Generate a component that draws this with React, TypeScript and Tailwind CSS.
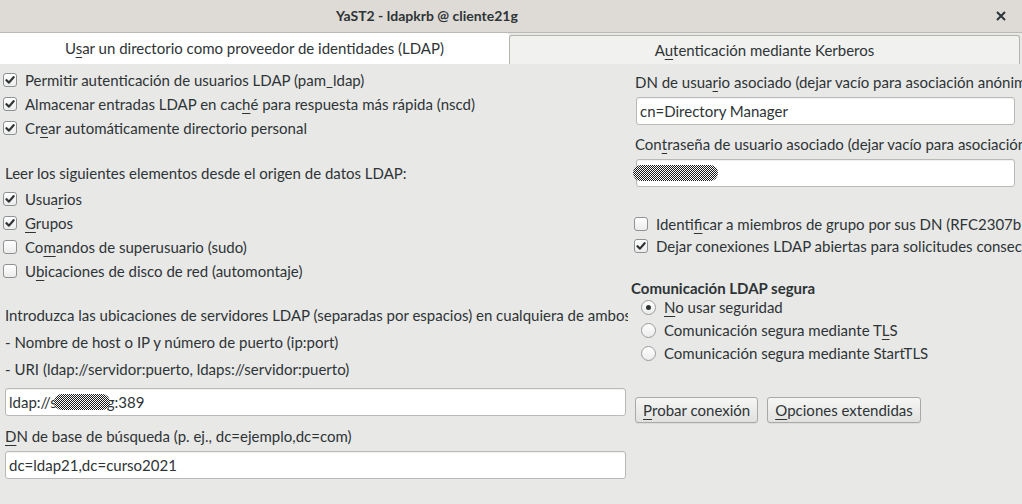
import React from "react";

const font = { fontFamily: "Lato, 'Noto Sans', sans-serif" };

function Check({ on }: { on?: boolean }) {
  return (
    <span className="w-[14px] h-[14px] shrink-0 rounded-[3px] border border-[#8f9292] bg-gradient-to-b from-[#ffffff] to-[#ececec] flex items-center justify-center">
      {on && (
        <svg width="10" height="10" viewBox="0 0 10 10">
          <path d="M1.5 5.2 L4 7.6 L8.6 2.2" fill="none" stroke="#2e3436" strokeWidth="2.2" strokeLinecap="round" strokeLinejoin="round" />
        </svg>
      )}
    </span>
  );
}

function Radio({ on }: { on?: boolean }) {
  return (
    <span className="w-[15px] h-[15px] shrink-0 rounded-full border border-[#9a9c9c] bg-gradient-to-b from-[#ffffff] to-[#ececec] flex items-center justify-center">
      {on && <span className="w-[5px] h-[5px] rounded-full bg-[#2e3436]" />}
    </span>
  );
}

function U({ children }: { children: React.ReactNode }) {
  return <span className="underline decoration-1 underline-offset-[3px]">{children}</span>;
}

function CheckRow({ on, children, h = "h-6" }: { on?: boolean; children: React.ReactNode; h?: string }) {
  return (
    <div className={`flex items-center gap-[8px] whitespace-nowrap ${h}`}>
      <Check on={on} />
      <span>{children}</span>
    </div>
  );
}

function Field({ value, className = "" }: { value: React.ReactNode; className?: string }) {
  return (
    <div className={`relative h-[28px] rounded-[3px] border border-[#b9b9b5] bg-white flex items-center px-[3px] whitespace-nowrap shadow-[inset_0_1px_1px_rgba(0,0,0,0.06)] ${className}`}>
      {value}
    </div>
  );
}

function Scribble({ className }: { className: string }) {
  return (
    <span className={`absolute rounded-full bg-[repeating-conic-gradient(#1a1a1a_0_25%,#ffffff_0_50%)] bg-[length:2px_2px] ${className}`} />
  );
}

function Button({ children }: { children: React.ReactNode }) {
  return (
    <div className="h-[26px] px-[7px] flex items-center rounded-[3px] border border-[#a9aaa8] bg-gradient-to-b from-[#f6f6f5] to-[#e1e1df] shadow-[0_1px_0_rgba(0,0,0,0.05)] whitespace-nowrap">
      {children}
    </div>
  );
}

export default function App() {
  return (
    <div className="w-[1022px] h-[504px] overflow-hidden bg-[#e8e8e7] text-[#2e3436] text-[15px] leading-none" style={font}>
      {/* title bar */}
      <div className="h-[33px] bg-[#dedbd7] border-b border-[#bdb9b4] flex items-center relative">
        <div className="pl-[336px] text-[14px] font-bold text-[#2e3436]">YaST2 - ldapkrb @ cliente21g</div>
        <div className="absolute right-[12px] top-[7px] w-[18px] h-[18px] flex items-center justify-center">
          <svg width="10" height="10" viewBox="0 0 10 10">
            <path d="M1 1 L9 9 M9 1 L1 9" stroke="#2e3436" strokeWidth="2" />
          </svg>
        </div>
      </div>

      {/* tabs */}
      <div className="h-[31px] flex items-end">
        <div className="w-[509px] h-[31px] bg-white rounded-tr-[3px] flex items-center justify-center">
          <span>U<U>s</U>ar un directorio como proveedor de identidades (LDAP)</span>
        </div>
        <div className="w-[511px] h-[29px] bg-[#f1f1f0] border border-b-0 border-[#b3b3b0] rounded-t-[3px] flex items-center justify-center">
          <span>A<U>u</U>tenticación mediante Kerberos</span>
        </div>
      </div>

      <div className="flex">
        {/* left column */}
        <div className="w-[628px] shrink-0 overflow-hidden pl-[3px] whitespace-nowrap">
          <div className="mt-[4px]">
            <CheckRow on>Permitir autenticación de usuarios LDAP (pam_ldap)</CheckRow>
            <CheckRow on>Almacenar entradas LDAP en cac<U>h</U>é para respuesta más rápida (nscd)</CheckRow>
            <CheckRow on>Cr<U>e</U>ar automáticamente directorio personal</CheckRow>
          </div>
          <div className="mt-[21px] h-6 flex items-center pl-[2px]">Leer los siguientes elementos desde el origen de datos LDAP:</div>
          <div className="mt-[2px]">
            <CheckRow on>Usua<U>r</U>ios</CheckRow>
            <CheckRow on><U>G</U>rupos</CheckRow>
            <CheckRow>Co<U>m</U>andos de superusuario (sudo)</CheckRow>
            <CheckRow>U<U>b</U>icaciones de disco de red (automontaje)</CheckRow>
          </div>
          <div className="mt-[20px] h-6 flex items-center pl-[2px]">Introduzca las ubicaciones de servidores LDAP (separadas por espacios) en cualquiera de ambos formatos:</div>
          <div className="mt-[3px] h-6 flex items-center pl-[2px]">- Nombre de host o IP y número de puerto (ip:port)</div>
          <div className="mt-[3px] h-6 flex items-center pl-[2px]">- URI (ldap://servidor:puerto, ldaps://servidor:puerto)</div>
          <Field
            className="mt-[7px] ml-[2px] w-[621px]"
            value={
              <>
                <span>ldap://s</span>
                <span className="inline-block w-[50px]" />
                <span>g:389</span>
                <Scribble className="left-[48px] top-[5px] w-[56px] h-[16px]" />
              </>
            }
          />
          <div className="mt-[8px] h-6 flex items-center pl-[2px]"><U>D</U>N de base de búsqueda (p. ej., dc=ejemplo,dc=com)</div>
          <Field className="mt-[3px] ml-[2px] w-[621px]" value="dc=ldap21,dc=curso2021" />
        </div>

        {/* right column */}
        <div className="flex-1 overflow-hidden whitespace-nowrap pl-[6px]">
          <div className="mt-[6px] h-6 flex items-center pl-[1px]">DN de usua<U>r</U>io asociado (dejar vacío para asociación anónima)</div>
          <Field className="mt-[3px] ml-[2px] w-[379px]" value="cn=Directory Manager" />
          <div className="mt-[7px] h-6 flex items-center pl-[1px]">Con<U>t</U>raseña de usuario asociado (dejar vacío para asociación anónima)</div>
          <Field
            className="mt-[3px] ml-[2px] w-[379px]"
            value={<Scribble className="left-[-4px] top-[5px] w-[85px] h-[16px]" />}
          />
          <div className="mt-[26px]">
            <CheckRow h="h-[22px]">Identi<U>f</U>icar a miembros de grupo por sus DN (RFC2307bis)</CheckRow>
            <CheckRow h="h-[22px]" on>Dejar conexiones LDAP abiertas para solicitudes consecutivas</CheckRow>
          </div>
          <div className="mt-[23px] h-[16px] flex items-center font-bold -ml-[3px]">Comunicación LDAP segura</div>
          <div className="pl-[7px]">
            <div className="h-[23px] flex items-center gap-[8px]"><Radio on /><span><U>N</U>o usar seguridad</span></div>
            <div className="h-[23px] flex items-center gap-[8px]"><Radio /><span>Comunicación segura mediante T<U>L</U>S</span></div>
            <div className="h-[23px] flex items-center gap-[8px]"><Radio /><span>Comunicación segura mediante StartTLS</span></div>
          </div>
          <div className="mt-[32px] flex gap-[9px] pl-[1px]">
            <Button><U>P</U>robar conexión</Button>
            <Button><U>O</U>pciones extendidas</Button>
          </div>
        </div>
      </div>
    </div>
  );
}
